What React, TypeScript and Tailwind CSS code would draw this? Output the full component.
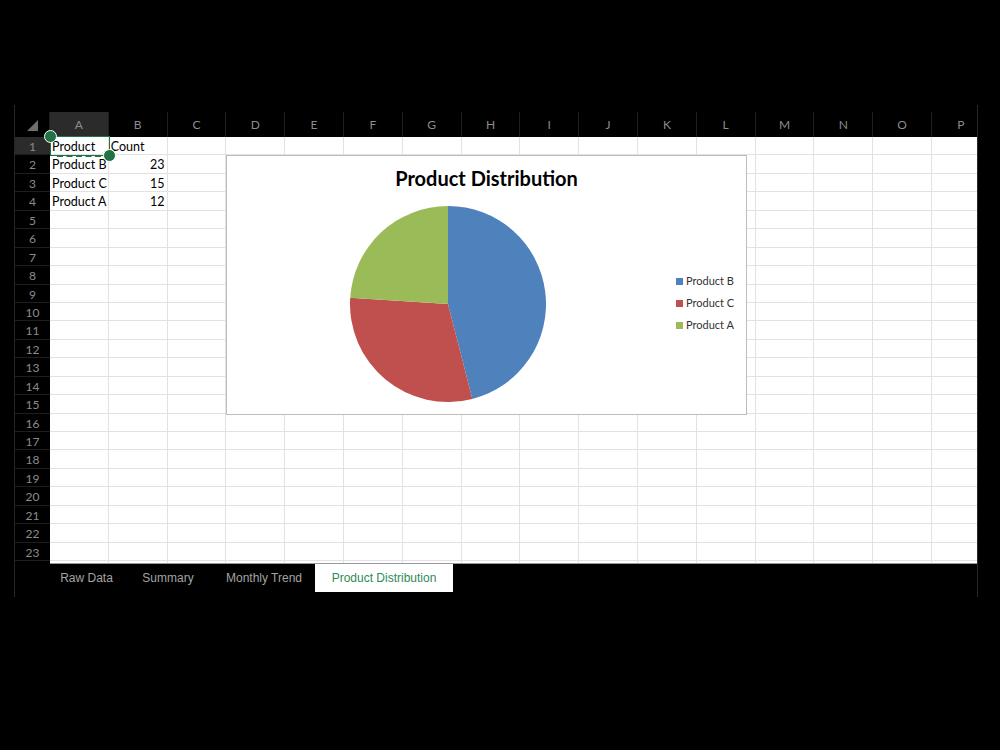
import React from 'react';

const COLS = ['A', 'B', 'C', 'D', 'E', 'F', 'G', 'H', 'I', 'J', 'K', 'L', 'M', 'N', 'O', 'P'];
const ROWS = Array.from({ length: 23 }, (_, i) => i + 1);

const cells: Record<string, { text: string; right?: boolean }> = {
  'A1': { text: 'Product' },
  'B1': { text: 'Count' },
  'A2': { text: 'Product B' },
  'B2': { text: '23', right: true },
  'A3': { text: 'Product C' },
  'B3': { text: '15', right: true },
  'A4': { text: 'Product A' },
  'B4': { text: '12', right: true },
};

const data = [
  { name: 'Product B', value: 23, color: '#4F81BD' },
  { name: 'Product C', value: 15, color: '#C0504D' },
  { name: 'Product A', value: 12, color: '#9BBB59' },
];

function PieChart() {
  const total = data.reduce((s, d) => s + d.value, 0);
  const r = 98;
  const c = 98;
  let start = 0;
  return (
    <svg width="196" height="196" viewBox="0 0 196 196">
      {data.map((d) => {
        const a0 = (start / total) * Math.PI * 2;
        start += d.value;
        const a1 = (start / total) * Math.PI * 2;
        const x0 = c + r * Math.sin(a0);
        const y0 = c - r * Math.cos(a0);
        const x1 = c + r * Math.sin(a1);
        const y1 = c - r * Math.cos(a1);
        const large = a1 - a0 > Math.PI ? 1 : 0;
        return (
          <path
            key={d.name}
            d={`M${c},${c} L${x0},${y0} A${r},${r} 0 ${large} 1 ${x1},${y1} Z`}
            fill={d.color}
          />
        );
      })}
    </svg>
  );
}

function Chart() {
  return (
    <div className="absolute left-[176px] top-[18px] w-[521px] h-[260px] bg-white border border-[#bdbdbd] font-['Lato',sans-serif]">
      <div className="pt-[9px] text-center text-[20px] leading-[26px] font-bold text-black">
        Product Distribution
      </div>
      <div className="absolute left-[123px] top-[50px]">
        <PieChart />
      </div>
      <div className="absolute left-[449px] top-[116px] flex flex-col gap-[4px]">
        {data.map((d) => (
          <div key={d.name} className="flex items-center gap-[3px] h-[18px] text-[11px] text-[#333]">
            <span className="w-[7px] h-[7px]" style={{ backgroundColor: d.color }} />
            <span>{d.name}</span>
          </div>
        ))}
      </div>
    </div>
  );
}

export default function App() {
  const tabs = [
    { name: 'Raw Data', w: 'w-[73px]' },
    { name: 'Summary', w: 'w-[90px]' },
    { name: 'Monthly Trend', w: 'w-[102px]' },
  ];

  return (
    <div className="w-[1000px] h-[750px] bg-black overflow-hidden font-['Lato',sans-serif]">
      <div className="ml-[14px] mt-[105px] w-[964px] h-[492px] border-l border-r border-[#262626] flex flex-col">
        {/* column headers */}
        <div className="mt-[7px] h-[25px] flex">
          <div className="w-[35px] shrink-0 relative border-r border-[#1e1e1e]">
            <svg className="absolute left-[12px] top-[8px]" width="11" height="11" viewBox="0 0 11 11">
              <polygon points="11,0 11,11 0,11" fill="#6e6e6e" />
            </svg>
          </div>
          <div className="flex-1 flex overflow-hidden">
            {COLS.map((c) => (
              <div
                key={c}
                className={`w-[58.8px] shrink-0 border-r border-[#1e1e1e] text-center text-[12px] leading-[25px] text-[#8c8c8c] ${
                  c === 'A' ? 'bg-[#2b2b2b]' : ''
                }`}
              >
                {c}
              </div>
            ))}
          </div>
        </div>

        {/* body */}
        <div className="relative h-[427px] flex">
          <div className="w-[35px] shrink-0 overflow-hidden">
            {ROWS.map((r) => (
              <div
                key={r}
                className={`h-[18.45px] border-b border-[#1e1e1e] text-center text-[12px] leading-[19px] text-[#8c8c8c] ${
                  r === 1 ? 'bg-[#2b2b2b]' : ''
                }`}
              >
                {r}
              </div>
            ))}
          </div>
          <div className="relative flex-1 bg-white overflow-hidden border-b border-[#9a9a9a]">
            {[...ROWS, 24].map((r) => (
              <div key={r} className="flex h-[18.45px]">
                {COLS.map((c) => {
                  const cell = cells[`${c}${r}`];
                  return (
                    <div
                      key={c}
                      className={`w-[58.8px] shrink-0 border-r border-b border-[#e2e2e2] px-[2px] text-[12.5px] leading-[19px] text-black whitespace-nowrap ${
                        cell?.right ? 'text-right' : ''
                      }`}
                    >
                      {cell?.text}
                    </div>
                  );
                })}
              </div>
            ))}
            <Chart />
          </div>

          {/* selection of A1 */}
          <div className="absolute left-[35px] top-[-1px] w-[60px] h-[20px] border border-[#217346] pointer-events-none">
            <div className="absolute left-[6px] right-[8px] bottom-[-2px] border-b-2 border-dashed border-[#217346]" />
            <span className="absolute left-[-7px] top-[-7px] w-[13px] h-[13px] rounded-full bg-[#217346] border-[1.5px] border-white" />
            <span className="absolute right-[-7px] bottom-[-7px] w-[13px] h-[13px] rounded-full bg-[#217346] border-[1.5px] border-white" />
          </div>
        </div>

        {/* sheet tabs */}
        <div className="h-[28px] flex pl-[35px] font-['Liberation_Sans',Arial,sans-serif] text-[12px]">
          {tabs.map((t) => (
            <div key={t.name} className={`${t.w} h-[28px] flex items-center justify-center text-[#a3a3a3]`}>
              {t.name}
            </div>
          ))}
          <div className="w-[138px] h-[28px] bg-white flex items-center justify-center text-[#2f8a57]">
            Product Distribution
          </div>
        </div>
      </div>
    </div>
  );
}
